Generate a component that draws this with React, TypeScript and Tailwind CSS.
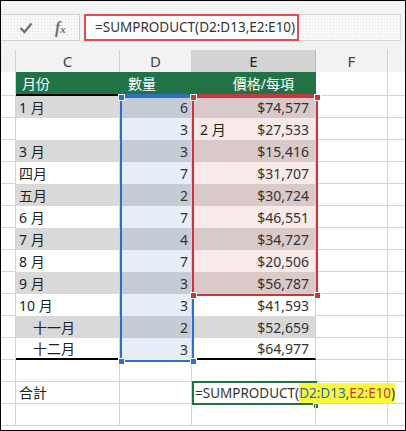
import React from 'react';

type Row = { c: string; d: string; e: string; note?: string };

const rows: Row[] = [
    { c: '1 月', d: '6', e: '$74,577' },
    { c: '', d: '3', e: '$27,533', note: '2 月' },
    { c: '3 月', d: '3', e: '$15,416' },
    { c: '四月', d: '7', e: '$31,707' },
    { c: '五月', d: '2', e: '$30,724' },
    { c: '6 月', d: '7', e: '$46,551' },
    { c: '7 月', d: '4', e: '$34,727' },
    { c: '8 月', d: '7', e: '$20,506' },
    { c: '9 月', d: '3', e: '$56,787' },
    { c: '10 月', d: '3', e: '$41,593' },
    { c: '\u3000十一月', d: '2', e: '$52,659' },
    { c: '\u3000十二月', d: '3', e: '$64,977' },
];

const font = "font-['Noto_Sans','Noto_Sans_CJK_TC',sans-serif]";

function Handle({ className }: { className: string }) {
    return <div className={`absolute w-[7px] h-[7px] border border-white ${className}`} />;
}

function DataRow({ row, i }: { row: Row; i: number }) {
    const odd = i % 2 === 0;
    const last = i === rows.length - 1;
    const inRed = i < 9;
    const cBg = odd ? 'bg-[#d9d9d9]' : 'bg-white';
    const dBg = odd ? 'bg-[#c6ccd5]' : 'bg-[#e7eef8]';
    let eBg = odd ? 'bg-[#d9d9d9]' : 'bg-white';
    if (inRed) eBg = odd ? 'bg-[#d9c9c9]' : 'bg-[#f9eaea]';
    const bottom = last ? 'border-b-2 border-b-black' : '';

    return (
        <div className="flex h-[22px] text-[14px] text-[#222]">
            <div className="w-[15px] border-r border-b border-[#d4d4d4]" />
            <div className={`w-[104px] flex items-center pl-[3px] border-r border-[#d4d4d4] whitespace-pre ${cBg} ${bottom}`}>
                {row.c}
            </div>
            <div className={`w-[72px] flex items-center justify-end pr-[3px] border-r border-[#d4d4d4] text-[#333] ${dBg}`}>
                {row.d}
            </div>
            <div className={`w-[124px] flex items-center justify-between pl-[8px] pr-[6px] border-r border-[#d4d4d4] text-[#333] ${eBg} ${bottom}`}>
                <span className="text-[#222]">{row.note ?? ''}</span>
                <span>{row.e}</span>
            </div>
            <div className="w-[72px] border-r border-b border-[#d4d4d4]" />
            <div className="flex-1 border-b border-[#d4d4d4]" />
        </div>
    );
}

function PlainRow({ label, children }: { label?: string; children?: React.ReactNode }) {
    return (
        <div className="flex h-[22px] text-[14px] text-[#222]">
            <div className="w-[15px] border-r border-b border-[#d4d4d4]" />
            <div className="w-[104px] flex items-center pl-[3px] border-r border-b border-[#d4d4d4]">{label}</div>
            <div className="w-[72px] border-r border-b border-[#d4d4d4]" />
            <div className="w-[124px] relative border-r border-b border-[#d4d4d4]">{children}</div>
            <div className="w-[72px] border-r border-b border-[#d4d4d4]" />
            <div className="flex-1 border-b border-[#d4d4d4]" />
        </div>
    );
}

export default function App() {
    return (
        <div className={`w-[406px] h-[431px] border border-black bg-white overflow-hidden relative ${font}`}>
            {/* Formula bar */}
            <div className="h-[49px] bg-[#f3f3f3] pt-[13px] flex">
                <div className="w-[79px] h-[27px] flex items-center border border-l-0 border-[#d0d0d0] bg-[#f7f7f7] bg-[radial-gradient(#e2e2e2_0.6px,transparent_0.6px)] bg-[length:3px_3px]">
                    <svg className="ml-[18px]" width="14" height="12" viewBox="0 0 14 12">
                        <polyline points="1.5,6 5.5,10 12.5,1.5" fill="none" stroke="#707070" strokeWidth="2.4" />
                    </svg>
                    <span className="ml-[22px] font-['Liberation_Serif',serif] italic font-bold text-[#707070] text-[16px] leading-none">
                        f<span className="text-[11px]">x</span>
                    </span>
                </div>
                <div className="ml-[4px] w-[215px] h-[27px] flex items-center pl-[9px] border-2 border-[#e34b4f] bg-white text-[13.5px] text-[#333] whitespace-nowrap">
                    =SUMPRODUCT(D2:D13,E2:E10)
                </div>
                <div className="w-[102px] h-[27px] border border-l-0 border-[#d6d6d6] bg-[#f9f9f9] bg-[radial-gradient(#e4e4e4_0.6px,transparent_0.6px)] bg-[length:3px_3px]" />
            </div>

            {/* Column headers */}
            <div className="flex h-[22px] bg-[#f2f2f2] text-[15px] text-[#444]">
                <div className="w-[15px] border-r border-[#cfcfcf]" />
                <div className="w-[104px] flex items-center justify-center border-r border-[#cfcfcf]">C</div>
                <div className="w-[72px] flex items-center justify-center border-r border-[#cfcfcf]">D</div>
                <div className="w-[124px] flex items-center justify-center border-r border-[#bdbdbd] bg-[#d3d3d3] text-[#222]">E</div>
                <div className="w-[72px] flex items-center justify-center border-r border-[#cfcfcf]">F</div>
                <div className="flex-1" />
            </div>

            {/* Table header */}
            <div className="flex h-[24px] text-[14px] text-white">
                <div className="w-[15px] border-r border-b border-[#d4d4d4]" />
                <div className="w-[104px] flex items-center pl-[6px] bg-[#217346] border-b-2 border-b-black">月份</div>
                <div className="w-[72px] flex items-center pl-[8px] bg-[#217346] border-b-2 border-b-[#2f6fc7]">數量</div>
                <div className="w-[124px] flex items-center justify-end pr-[22px] bg-[#217346] border-b-2 border-b-[#c8363d]">價格/每項</div>
                <div className="w-[72px] border-r border-b border-[#d4d4d4]" />
                <div className="flex-1 border-b border-[#d4d4d4]" />
            </div>

            {rows.map((row, i) => (
                <DataRow key={i} row={row} i={i} />
            ))}

            <PlainRow />
            <PlainRow label="合計">
                <div className="absolute left-0 top-[-1px] w-[125px] h-[24px] border-2 border-r-0 border-[#217346]" />
                <div className="absolute left-[2px] top-[1px] h-[20px] w-[200px] flex items-center pl-[1px] bg-white text-[13.5px] text-[#333] whitespace-nowrap">
                    =SUMPRODUCT(
                    <span className="bg-[#fafa3c]">
                        <span className="text-[#2f66b8]">D2:D13</span>,<span className="text-[#c8363d]">E2:E10</span>)
                    </span>
                    <span className="ml-[1px] w-px h-[16px] bg-black" />
                </div>
                <div className="absolute left-[121px] top-[21px] w-[6px] h-[6px] bg-[#217346] border border-white" />
            </PlainRow>
            <PlainRow />

            {/* Selection outlines */}
            <div className="absolute left-[119px] top-[95px] w-[74px] h-[266px] border-2 border-[#2f6fc7]" />
            <div className="absolute left-[191px] top-[95px] w-[126px] h-[200px] border-2 border-[#c8363d]" />
            <Handle className="left-[117px] top-[93px] bg-[#2f6fc7]" />
            <Handle className="left-[117px] top-[357px] bg-[#2f6fc7]" />
            <Handle className="left-[189px] top-[357px] bg-[#2f6fc7]" />
            <Handle className="left-[189px] top-[93px] bg-[#c8363d]" />
            <Handle className="left-[313px] top-[93px] bg-[#c8363d]" />
            <Handle className="left-[189px] top-[291px] bg-[#c8363d]" />
            <Handle className="left-[313px] top-[291px] bg-[#c8363d]" />
        </div>
    );
}
